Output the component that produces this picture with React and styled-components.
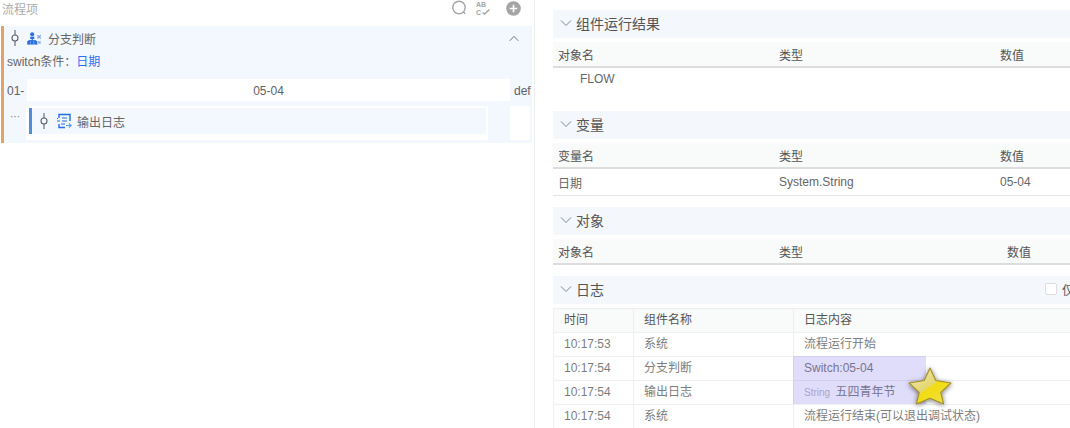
import React from "react";
import styled, { createGlobalStyle } from "styled-components";

const Global = createGlobalStyle`
  html, body { margin: 0; padding: 0; background: #fff; overflow: hidden; }
  body { font-family: "Liberation Sans", "Noto Sans CJK SC", sans-serif; font-size: 12px; color: #606266; }
  * { box-sizing: border-box; }
`;

const Page = styled.div`
  display: flex;
  width: 1070px;
  height: 428px;
  overflow: hidden;
`;

const LeftPane = styled.div`
  width: 535px;
  flex: none;
  height: 100%;
  border-right: 1px solid #eeeeee;
  padding-left: 2px;
`;

const LeftHead = styled.div`
  display: flex;
  align-items: center;
  justify-content: space-between;
  height: 26px;
  padding: 0 13px 10px 0;
  color: #ababab;
`;

const HeadIcons = styled.div`
  display: flex;
  align-items: center;
  gap: 9px;
`;

const AbcIcon = styled.svg`
  display: block;
`;

const PlusIcon = styled.svg`
  display: block;
  margin-left: 6px;
`;

const Card = styled.div`
  width: 531px;
  height: 117px;
  margin-left: -1px;
  background: #f3f7fe;
  border-left: 3px solid #e5a267;
  display: flex;
  flex-direction: column;
`;

const CardHead = styled.div`
  display: flex;
  align-items: center;
  height: 26px;
  padding: 0 13px 2px 6px;
  color: #666;
`;

const NodeLabel = styled.span`
  margin-left: ${(p) => p.$gap}px;
`;

const Chevron = styled.svg`
  display: block;
  flex: none;
`;

const CollapseIcon = styled(Chevron)`
  margin-left: auto;
`;

const GroupIcon = styled.svg`
  display: block;
  flex: none;
  margin-left: 7px;
`;

const FlowIcon = styled.svg`
  display: block;
  flex: none;
  margin-left: 7px;
`;

const Condition = styled.div`
  height: 20px;
  line-height: 20px;
  padding-left: 3px;
  color: #666;
`;

const Link = styled.span`
  color: #2d6ff0;
`;

const CaseRow = styled.div`
  display: flex;
  align-items: stretch;
  height: 22px;
  margin-top: 7px;
  line-height: 24px;
`;

const CaseKey = styled.div`
  width: 23px;
  padding-left: 3px;
  flex: none;
  white-space: nowrap;
`;

const CaseValue = styled.div`
  width: 483px;
  background: #fff;
  text-align: center;
  flex: none;
`;

const CaseDefault = styled.div`
  margin-left: 4px;
  overflow: hidden;
  width: 17px;
`;

const BodyRow = styled.div`
  display: flex;
  height: 34px;
  margin-top: 5px;
`;

const Dots = styled.div`
  width: 22px;
  flex: none;
  padding: 5px 0 0 6px;
  line-height: 12px;
  font-size: 10px;
  color: #777;
`;

const Branch = styled.div`
  width: 462px;
  flex: none;
  background: #fff;
  padding: 2px 2px 6px 3px;
`;

const BranchNode = styled.div`
  display: flex;
  align-items: center;
  height: 26px;
  background: #f3f7fe;
  border-left: 3px solid #4f8fd8;
  padding-left: 7px;
  color: #666;
`;

const BranchSide = styled.div`
  width: 20px;
  margin-left: 22px;
  background: #fff;
`;

const RightPane = styled.div`
  flex: 1;
  min-width: 0;
  padding: 10px 0 0 18px;
  overflow: hidden;
`;

const SectionBar = styled.div`
  display: flex;
  align-items: center;
  height: 28px;
  background: #f4f7fb;
  padding: 0 0 2px 7px;
  font-size: 14px;
  color: #555;
  gap: 4px;
  margin-bottom: 4px;
`;

const OnlyCheck = styled.label`
  margin-left: auto;
  width: 25px;
  overflow: hidden;
  display: flex;
  align-items: center;
  gap: 5px;
  flex: none;
  font-size: 12px;
  white-space: nowrap;
`;

const CheckBox = styled.span`
  width: 12px;
  height: 12px;
  flex: none;
  background: #fff;
  border: 1px solid #dddddd;
  border-radius: 2px;
`;

const ResultHead = styled.div`
  display: grid;
  grid-template-columns: ${(p) => p.$cols || "221px 221px 1fr"};
  height: 26px;
  align-items: center;
  background: #f9fafa;
  border-bottom: 2px solid #dddddd;
  padding-left: 5px;
  color: #555;
`;

const ResultRow = styled.div`
  display: grid;
  grid-template-columns: ${(p) => p.$cols || "221px 221px 1fr"};
  height: ${(p) => p.$h}px;
  padding: ${(p) => p.$padTop ?? 0}px 0 0 ${(p) => p.$pad ?? 5}px;
  align-items: ${(p) => p.$align || "center"};
  border-bottom: ${(p) => (p.$line ? "1px solid #e5e5e5" : "none")};
  margin-bottom: ${(p) => p.$mb ?? 0}px;
  color: #666;
`;

const LogWrap = styled.div`
  position: relative;
`;

const LogGrid = styled.div`
  display: grid;
  grid-template-columns: 80px 160px 1fr;
  border-top: 1px solid #eeeef3;
`;

const LogHeadCell = styled.div`
  height: 24px;
  line-height: 23px;
  padding-left: 10px;
  background: #f9fafa;
  color: #555;
  border-left: 1px solid #eeeef3;
  border-bottom: 1px solid #eeeef3;
`;

const LogCell = styled.div`
  height: 24px;
  line-height: 23px;
  padding-left: 10px;
  color: #7d7d7d;
  background: #fff;
  border-left: 1px solid #eeeef3;
  border-bottom: 1px solid #eeeef3;
  white-space: nowrap;
`;

const TypeTag = styled.span`
  color: #b9b9c4;
  font-size: 10px;
  margin-right: 2px;
`;

const Highlight = styled.div`
  position: absolute;
  left: 240px;
  top: 48px;
  width: 133px;
  height: 48px;
  background: rgba(100, 85, 230, 0.2);
  pointer-events: none;
`;

const Star = styled.svg`
  position: absolute;
  left: 356px;
  top: 57px;
  pointer-events: none;
  overflow: visible;
`;

const NodeLine = () => (
  <svg width="10" height="20" viewBox="0 0 10 20" fill="none" stroke="#5f6368" strokeWidth="1.1" style={{ flex: "none" }}>
    <path d="M5 2v5M5 13v5" />
    <circle cx="5" cy="10" r="3" />
  </svg>
);

const BranchIcon = () => (
  <GroupIcon width="15" height="13" viewBox="0 0 16 14">
    <g fill="#2a70e0">
      <circle cx="5.5" cy="2.4" r="2.2" />
      <rect x="3.4" y="5" width="4.4" height="2.6" />
      <rect x="5" y="7.4" width="1.2" height="2" />
      <rect x="1.5" y="8.6" width="8" height="1" />
      <rect x="0.2" y="9.6" width="3.6" height="4" />
      <rect x="4" y="9.6" width="3.2" height="4" />
      <rect x="7.6" y="9.6" width="3.4" height="4" />
    </g>
    <path d="M11 3.5l3.8 3.5M14.8 3.5L11 7M12 10l2.6 2.6M14.6 10L12 12.6" stroke="#7fa8e8" strokeWidth="1.2" fill="none" />
  </GroupIcon>
);

const LogIcon = () => (
  <FlowIcon width="16" height="16" viewBox="0 0 16 16" fill="none">
    <path d="M3 5V1.5h11V8M3 11v3.5h6" stroke="#1f6fe6" strokeWidth="1.4" />
    <path d="M6 5h5M1 8h3M6 8h5M1 5.5h1M5 11h4" stroke="#1f6fe6" strokeWidth="1.2" />
    <path d="M10 12.5h5M13 10.5l2.2 2-2.2 2" stroke="#5c9ef0" strokeWidth="1.2" />
  </FlowIcon>
);

const Down = () => (
  <Chevron width="12" height="8" viewBox="0 0 12 8" fill="none" stroke="#7b8794">
    <path d="M1 1.5l5 5 5-5" />
  </Chevron>
);

const logRows = [
  ["10:17:53", "系统", "流程运行开始"],
  ["10:17:54", "分支判断", "Switch:05-04"],
  ["10:17:54", "输出日志", <><TypeTag>String</TypeTag> 五四青年节</>],
  ["10:17:54", "系统", "流程运行结束(可以退出调试状态)"],
];

export default function App() {
  return (
    <Page>
      <Global />
      <LeftPane>
        <LeftHead>
          <span>流程项</span>
          <HeadIcons>
            <svg width="16" height="16" viewBox="0 0 16 16" fill="none" stroke="#a5a5a5" strokeWidth="1.4">
              <circle cx="8" cy="7.5" r="6.2" />
              <path d="M12.6 12l1.6 1.7" />
            </svg>
            <AbcIcon width="15" height="16" viewBox="0 0 15 16">
              <text x="0" y="6.5" fontSize="7" fontWeight="700" fill="#a5a5a5" fontFamily="Liberation Sans">AB</text>
              <text x="0" y="14.5" fontSize="7" fontWeight="700" fill="#a5a5a5" fontFamily="Liberation Sans">C</text>
              <path d="M6.5 12.5l2 1.5 5-4.5" stroke="#a5a5a5" strokeWidth="1.5" fill="none" />
            </AbcIcon>
            <PlusIcon width="15" height="15" viewBox="0 0 15 15">
              <circle cx="7.5" cy="7.5" r="7.3" fill="#a5a5a5" />
              <path d="M7.5 3.8v7.4M3.8 7.5h7.4" stroke="#fff" strokeWidth="1.6" />
            </PlusIcon>
          </HeadIcons>
        </LeftHead>
        <Card>
          <CardHead>
            <NodeLine />
            <BranchIcon />
            <NodeLabel $gap={6}>分支判断</NodeLabel>
            <CollapseIcon width="10" height="7" viewBox="0 0 10 7" fill="none" stroke="#6d7480">
              <path d="M0.7 5.8L5 1.4l4.3 4.4" />
            </CollapseIcon>
          </CardHead>
          <Condition>
            switch条件：<Link>日期</Link>
          </Condition>
          <CaseRow>
            <CaseKey>01-</CaseKey>
            <CaseValue>05-04</CaseValue>
            <CaseDefault>default</CaseDefault>
          </CaseRow>
          <BodyRow>
            <Dots>···</Dots>
            <Branch>
              <BranchNode>
                <NodeLine />
                <LogIcon />
                <NodeLabel $gap={5}>输出日志</NodeLabel>
              </BranchNode>
            </Branch>
            <BranchSide />
          </BodyRow>
        </Card>
      </LeftPane>
      <RightPane>
        <SectionBar><Down />组件运行结果</SectionBar>
        <ResultHead>
          <span>对象名</span><span>类型</span><span>数值</span>
        </ResultHead>
        <ResultRow $h={43} $pad={27} $padTop={4} $align="start" $cols="199px 221px 1fr">
          <span>FLOW</span>
        </ResultRow>

        <SectionBar><Down />变量</SectionBar>
        <ResultHead>
          <span>变量名</span><span>类型</span><span>数值</span>
        </ResultHead>
        <ResultRow $h={27} $line $mb={11}>
          <span>日期</span><span>System.String</span><span>05-04</span>
        </ResultRow>

        <SectionBar><Down />对象</SectionBar>
        <ResultHead $cols="221px 228px 1fr">
          <span>对象名</span><span>类型</span><span>数值</span>
        </ResultHead>
        <ResultRow $h={11} />

        <SectionBar>
          <Down />日志
          <OnlyCheck><CheckBox />仅显示</OnlyCheck>
        </SectionBar>
        <LogWrap>
          <LogGrid>
            <LogHeadCell>时间</LogHeadCell>
            <LogHeadCell>组件名称</LogHeadCell>
            <LogHeadCell>日志内容</LogHeadCell>
            {logRows.map((r, i) => (
              <React.Fragment key={i}>
                <LogCell>{r[0]}</LogCell>
                <LogCell>{r[1]}</LogCell>
                <LogCell>{r[2]}</LogCell>
              </React.Fragment>
            ))}
          </LogGrid>
          <Highlight />
          <Star width="44" height="42" viewBox="0 0 44 42">
            <defs>
              <linearGradient id="gold" x1="0.15" y1="0.1" x2="0.85" y2="0.95">
                <stop offset="0" stopColor="#efe9a0" />
                <stop offset="0.47" stopColor="#e4d672" />
                <stop offset="0.52" stopColor="#f2dc10" />
                <stop offset="1" stopColor="#efdf44" />
              </linearGradient>
              <filter id="sh" x="-40%" y="-40%" width="180%" height="180%">
                <feDropShadow dx="0" dy="1" stdDeviation="2.5" floodColor="#000" floodOpacity="0.55" />
              </filter>
            </defs>
            <path
              d="M21 3L26.8 15.5 42 18 31.8 27.4 34.6 39 21 33.2 7.4 39 10.2 27.4 0 18 15.2 15.5z"
              fill="url(#gold)"
              stroke="#a08c24"
              strokeWidth="1.1"
              strokeLinejoin="round"
              filter="url(#sh)"
            />
          </Star>
        </LogWrap>
      </RightPane>
    </Page>
  );
}
